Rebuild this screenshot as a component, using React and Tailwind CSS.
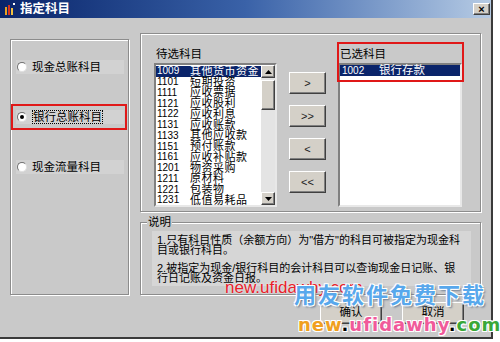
import React from 'react'

const pending = [
  ['1009','其他货币资金'],['1101','短期投资'],['1111','应收票据'],['1121','应收股利'],
  ['1122','应收利息'],['1131','应收账款'],['1133','其他应收款'],['1151','预付账款'],
  ['1161','应收补贴款'],['1201','物资采购'],['1211','原材料'],['1221','包装物'],['1231','低值易耗品'],
]

const raised = 'border border-t-white border-l-white border-b-[#404040] border-r-[#404040] shadow-[inset_-1px_-1px_0_#808080] bg-[#d4d0c8]'
const etched = 'border border-[#8c8c8c] shadow-[inset_1px_1px_0_#fff,1px_1px_0_#fff]'
const sunken = 'border-2 border-t-[#808080] border-l-[#808080] border-b-[#e8e8e8] border-r-[#e8e8e8] bg-white'

function Radio({ label, checked, boxed }){
  return (
    <div className={`h-[26px] w-[116px] flex items-center border-2 ${boxed ? 'border-[#e01818]' : 'border-transparent'}`}>
      <div className="ml-[3px] h-[14px] w-[108px] bg-[#d2d2d2] flex items-center">
        <span className="ml-[1px] w-[10px] h-[10px] rounded-full bg-white border border-t-[#707070] border-l-[#707070] border-b-[#e0e0e0] border-r-[#e0e0e0] flex items-center justify-center">
          {checked && <span className="w-[4px] h-[4px] rounded-full bg-black" />}
        </span>
        <span className={`ml-[5px] text-[11.5px] leading-[12px] text-black ${checked ? 'border border-dotted border-black' : ''}`}>{label}</span>
      </div>
    </div>
  )
}

function ArrowBtn({ children }){
  return (
    <div className={`${raised} w-[37px] h-[22px] flex items-center justify-center text-[11px] text-[#222]`}>{children}</div>
  )
}

export default function App(){
  return (
    <div className="w-[500px] h-[342px] bg-white relative overflow-hidden font-['Liberation_Sans','Noto_Sans_CJK_SC',sans-serif]">
      <div className="w-[493px] h-[339px] bg-[#c9c9c9] border-r-2 border-b-2 border-[#3a3a3a] flex flex-col">
        {/* title bar */}
        <div className="h-[18px] bg-linear-to-r from-[#0a246a] via-[#3a62a8] to-[#b6cbe4] flex items-center pl-[5px]">
          <svg width="10" height="12" viewBox="0 0 10 12">
            <rect x="0" y="4" width="2" height="8" fill="#e8a020" />
            <rect x="3" y="2" width="2" height="10" fill="#d83020" />
            <rect x="6" y="5" width="2" height="7" fill="#f0c040" />
            <rect x="8" y="0" width="2" height="2" fill="#fff" />
          </svg>
          <span className="ml-[5px] text-white font-bold text-[12.5px] leading-none">指定科目</span>
          <div className={`${raised} ml-auto mr-[1px] w-[17px] h-[12px] flex items-center justify-center text-[11px] font-bold leading-none text-black`}>×</div>
        </div>

        {/* body */}
        <div className="flex items-start">
          <div className={`${etched} ml-[10px] mt-[21px] w-[119px] h-[256px] flex flex-col gap-[24px] pt-[14px]`}>
            <Radio label="现金总账科目" />
            <Radio label="银行总账科目" checked boxed />
            <Radio label="现金流量科目" />
          </div>

          <div className="ml-[11px] mt-[15px] w-[341px] flex flex-col">
            <div className={`${etched} relative h-[179px] flex pt-[11px] pl-[13px]`}>
              <div className="w-[123px] flex flex-col">
                <div className="h-[18px] pl-[2px] text-[11.5px] leading-[18px] text-black">待选科目</div>
                <div className={`${sunken} h-[144px] flex`}>
                  <div className="flex-1 flex flex-col pt-[1px]">
                    {pending.map(([c, n], i) => (
                      <div key={c} className={`h-[10.75px] flex items-center leading-none ${i === 0 ? 'bg-[#0a246a] text-white' : 'text-black'}`}>
                        <span className="w-[34px] pl-[1px] text-[10px]">{c}</span>
                        <span className="text-[11px] tracking-[0.5px]">{n}</span>
                      </div>
                    ))}
                  </div>
                  <div className="w-[14px] bg-[#e4e4e4] flex flex-col">
                    <div className={`${raised} h-[13px] flex items-center justify-center`}>
                      <svg width="7" height="4" viewBox="0 0 7 4"><path d="M3.5 0 L7 4 L0 4 Z" fill="#000" /></svg>
                    </div>
                    <div className={`${raised} h-[30px] mt-[2px]`} />
                    <div className="flex-1" />
                    <div className={`${raised} h-[13px] flex items-center justify-center`}>
                      <svg width="7" height="4" viewBox="0 0 7 4"><path d="M0 0 L7 0 L3.5 4 Z" fill="#000" /></svg>
                    </div>
                  </div>
                </div>
              </div>

              <div className="ml-[12px] pt-[27px] flex flex-col gap-[11px]">
                <ArrowBtn>&gt;</ArrowBtn>
                <ArrowBtn>&gt;&gt;</ArrowBtn>
                <ArrowBtn>&lt;</ArrowBtn>
                <ArrowBtn>&lt;&lt;</ArrowBtn>
              </div>

              <div className="ml-[12px] w-[124px] flex flex-col">
                <div className="h-[18px] pl-[2px] text-[11.5px] leading-[18px] text-black">已选科目</div>
                <div className={`${sunken} h-[144px] flex flex-col`}>
                  <div className="h-[11px] bg-[#0a246a] text-white flex items-center leading-none">
                    <span className="w-[39px] pl-[2px] text-[10px]">1002</span>
                    <span className="text-[11.5px]">银行存款</span>
                  </div>
                </div>
              </div>

              <div className="absolute left-[196px] top-[8px] w-[127px] h-[40px] border-2 border-[#e01818]" />
            </div>

            <div className={`${etched} relative mt-[10px] h-[73px] pt-[8px] pl-[11px]`}>
              <span className="absolute -top-[8px] left-[6px] px-[1px] bg-[#c9c9c9] text-[11.5px] leading-[15px] text-black">说明</span>
              <div className="w-[319px] h-[55px] bg-[#d6d6d6] pl-[5px] pt-[4px] text-[11px] leading-[10px] text-black">
                <div>1.只有科目性质（余额方向）为"借方"的科目可被指定为现金科</div>
                <div>目或银行科目。</div>
                <div className="mt-[8px]">2.被指定为现金/银行科目的会计科目可以查询现金日记账、银</div>
                <div>行日记账及资金日报。</div>
              </div>
            </div>
          </div>
        </div>

        <div className="flex mt-[7px] ml-[320px] gap-[20px]">
          <div className={`${raised} w-[62px] h-[22px] flex items-center justify-center text-[11.5px] text-black`}>确认</div>
          <div className={`${raised} w-[62px] h-[22px] flex items-center justify-center text-[11.5px] text-black`}>取消</div>
        </div>
      </div>

      {/* watermarks */}
      <div className="absolute left-[225px] top-[279px] text-[17px] leading-none text-[#e8202a] [text-shadow:0_0_2px_#fff]">new.ufidawhy.com</div>
      <div className="absolute left-[294px] top-[285px] text-[22px] leading-none font-bold tracking-[2px] text-[#58a8ec] [text-shadow:-1px_-1px_0_#fff,1px_1px_0_#fff,1px_-1px_0_#fff,-1px_1px_0_#fff,2px_2px_2px_#6a7a90]">用友软件免费下载</div>
      <div className="absolute left-[298px] top-[316px] text-[18px] leading-none font-black tracking-[1px] font-['DejaVu_Sans',sans-serif] [text-shadow:-1px_-1px_0_#fff,1px_1px_0_#fff,1px_-1px_0_#fff,-1px_1px_0_#fff]">
        <span className="text-[#f0a020]">new</span>
        <span className="text-black">.</span>
        <span className="text-[#f05a9a]">ufidawhy</span>
        <span className="text-black">.</span>
        <span className="text-[#3aa838]">com</span>
      </div>
    </div>
  )
}
